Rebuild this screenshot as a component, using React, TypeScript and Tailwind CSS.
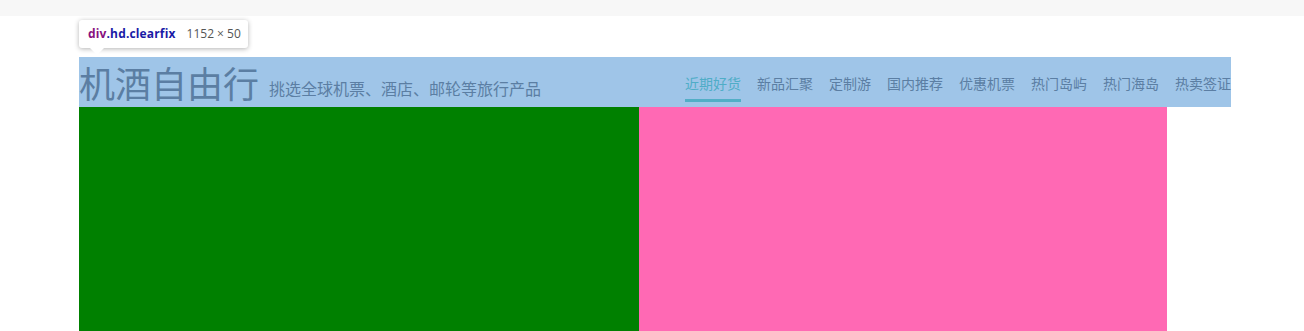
import React from "react";

const navItems = ["近期好货", "新品汇聚", "定制游", "国内推荐", "优惠机票", "热门岛屿", "热门海岛", "热卖签证"];

export default function App() {
  return (
    <div className="relative h-[331px] bg-white overflow-hidden" style={{ fontFamily: '"Microsoft YaHei", "Noto Sans CJK SC", sans-serif' }}>
      <div className="h-[16px] bg-[#f7f7f7]" />
      <div className="ml-[79px] mt-[41px] w-[1152px]">
        <div className="flex h-[50px] bg-[#9fc5e8] text-[#5b7ea3]">
          <div className="flex items-start">
            <h1 className="text-[36px] leading-[50px] font-normal">机酒自由行</h1>
            <span className="ml-[10px] pt-[21px] text-[16px] leading-[20px]">挑选全球机票、酒店、邮轮等旅行产品</span>
          </div>
          <ul className="ml-auto flex items-start">
            {navItems.map((t, i) => (
              <li
                key={t}
                className={
                  i === 0
                    ? "ml-[16px] pt-[15px] pb-[4px] leading-[23px] text-[14px] border-b-[3px] border-[#52aec6] text-[#4fadc7]"
                    : "ml-[16px] pt-[15px] pb-[4px] leading-[23px] text-[14px] border-b-[3px] border-transparent"
                }
              >
                {t}
              </li>
            ))}
          </ul>
        </div>
        <div className="flex h-[224px]">
          <div className="w-[560px] bg-[#008000]" />
          <div className="w-[528px] bg-[#ff69b4]" />
        </div>
      </div>
      <div className="absolute left-[79px] top-[20px] h-[28px] w-[169px] rounded-[3px] bg-white shadow-[0_1px_5px_rgba(0,0,0,0.3)] flex items-center pl-[9px] whitespace-nowrap text-[12px]" style={{ fontFamily: '"Segoe UI", "Open Sans", "DejaVu Sans", sans-serif' }}>
        <span className="font-bold tracking-[0.15px]">
          <span className="text-[#881280]">div</span>
          <span className="text-[#1a1aa6]">.hd.clearfix</span>
        </span>
        <span className="ml-[11px] text-[#555555]">1152 × 50</span>
        <div className="absolute left-[10px] top-[27px] h-0 w-0 border-l-[8px] border-r-[8px] border-t-[8px] border-l-transparent border-r-transparent border-t-white" />
      </div>
    </div>
  );
}
